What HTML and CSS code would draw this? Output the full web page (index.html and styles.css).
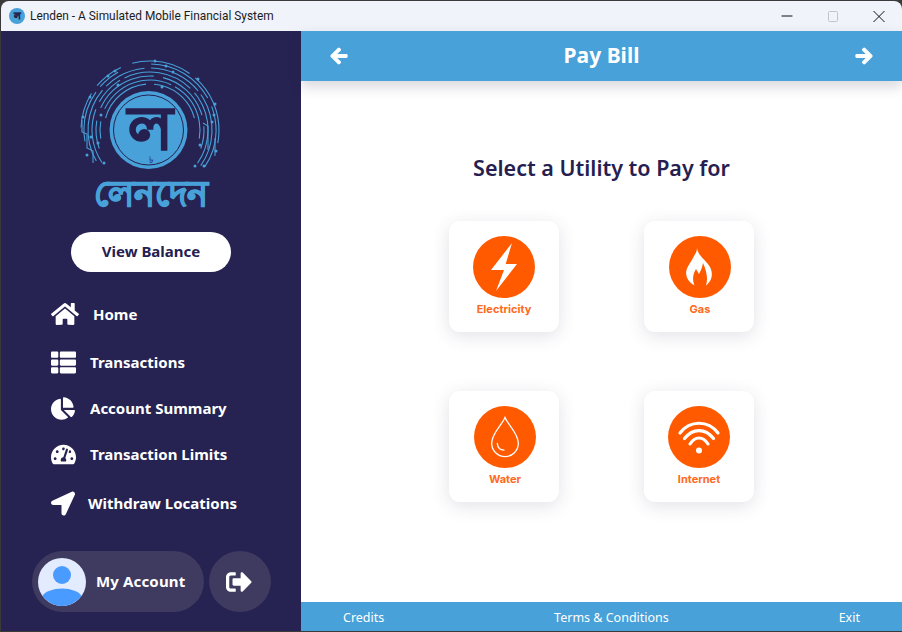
FILE: index.html
```html
<!DOCTYPE html>
<html lang="en">
  <head>
    <meta charset="UTF-8" />
    <title>Lenden</title>
    <link rel="stylesheet" href="styles.css">
  </head>
  <body>
    <div class="window">
      <div class="titlebar">
        <svg class="app-icon" viewBox="0 0 16 16">
          <circle cx="8" cy="8" r="8" fill="#48a1d8"/>
          <text x="8" y="11" text-anchor="middle" class="app-letter">ল</text>
        </svg>
        <span class="app-title">Lenden - A Simulated Mobile Financial System</span>
        <div class="controls">
          <svg viewBox="0 0 46 30"><path d="M17.500 15h11" stroke="#111" stroke-width="1"/></svg>
          <svg viewBox="0 0 46 30"><rect x="18.500" y="10.500" width="9" height="10" rx="1" fill="none" stroke="#c4c4c8"/></svg>
          <svg viewBox="0 0 46 30"><path d="M17.500 10l11 11M28.500 10l-11 11" stroke="#111" stroke-width="1"/></svg>
        </div>
      </div>
      <div class="main">
        <aside class="sidebar">
          <div class="logo">
            <svg class="logo-mark" viewBox="0 0 142 120">
              <g fill="none" stroke="#48a1d8" stroke-width="1.100">
                <circle cx="70" cy="72" r="69" pathLength="360" stroke-dasharray="30 8 25 10 50 6 60 171" transform="rotate(182 70 72)"/>
                <circle cx="70" cy="72" r="66" pathLength="360" stroke-dasharray="45 6 20 30 60 8 55 136" transform="rotate(170 70 72)"/>
                <circle cx="70" cy="72" r="62" pathLength="360" stroke-dasharray="70 5 40 6 50 4 70 115" transform="rotate(150 70 72)"/>
                <circle cx="70" cy="72" r="58" pathLength="360" stroke-dasharray="55 8 30 5 70 6 75 111" transform="rotate(146 70 72)"/>
                <circle cx="70" cy="72" r="54" pathLength="360" stroke-dasharray="30 14 70 10 60 12 24 140" transform="rotate(160 70 72)"/>
                <circle cx="70" cy="72" r="50" pathLength="360" stroke-dasharray="20 15 90 5 70 160" transform="rotate(170 70 72)"/>
                <circle cx="70" cy="72" r="46" pathLength="360" stroke-dasharray="70 10 70 210" transform="rotate(195 70 72)"/>
                <path d="M2 62v12l5 2v14l6 3v12M123 65l5 3v24M135 80v18"/>
              </g>
              <g fill="#48a1d8">
                <circle cx="75" cy="3" r="1.500"/><circle cx="86" cy="8" r="1.500"/><circle cx="93" cy="14" r="1.500"/>
                <circle cx="118" cy="21" r="1.500"/><circle cx="135" cy="46" r="1.500"/><circle cx="134" cy="57" r="1.500"/>
                <circle cx="124" cy="108" r="1.500"/><circle cx="115" cy="108" r="1.500"/><circle cx="24" cy="105" r="1.500"/>
                <circle cx="7" cy="97" r="1.500"/><circle cx="10" cy="39" r="1.500"/><circle cx="28" cy="18" r="1.500"/>
                <circle cx="35" cy="13" r="1.500"/><circle cx="38" cy="27" r="1.500"/><circle cx="3" cy="59" r="1.500"/>
                <circle cx="11" cy="79" r="1.500"/><circle cx="18" cy="85" r="1.500"/><circle cx="21" cy="57" r="1.500"/>
                <circle cx="82" cy="29" r="1.500"/><circle cx="132" cy="64" r="1.500"/><circle cx="120" cy="87" r="1.500"/>
                <circle cx="136" cy="93" r="1.500"/><circle cx="68.500" cy="72" r="39"/>
              </g>
              <circle cx="68.500" cy="72" r="35" fill="none" stroke="#25204f" stroke-width="1"/>
              <text x="70" y="91" text-anchor="middle" class="logo-letter">ল</text>
              <text x="71" y="105" text-anchor="middle" class="logo-taka">৳</text>
            </svg>
            <div class="wordmark">লেনদেন</div>
          </div>
          <button class="balance-btn">View Balance</button>
          <nav class="nav">
            <a class="nav-item nav-home">
              <svg class="nav-icon" viewBox="0 0 576 512"><path d="M280.37 148.26L96 300.11V464a16 16 0 0 0 16 16l112.06-.29a16 16 0 0 0 15.92-16V368a16 16 0 0 1 16-16h64a16 16 0 0 1 16 16v95.64a16 16 0 0 0 16 16.05L464 480a16 16 0 0 0 16-16V300L295.67 148.26a12.19 12.19 0 0 0-15.3 0zM571.6 251.47L488 182.56V44.05a12 12 0 0 0-12-12h-56a12 12 0 0 0-12 12v72.61L318.47 43a48 48 0 0 0-61 0L4.34 251.47a12 12 0 0 0-1.6 16.9l25.5 31A12 12 0 0 0 45.15 301l235.22-193.74a12.19 12.19 0 0 1 15.3 0L530.9 301a12 12 0 0 0 16.9-1.6l25.5-31a12 12 0 0 0-1.7-16.93z"/></svg>
              Home
            </a>
            <a class="nav-item nav-list">
              <svg class="nav-icon" viewBox="0 0 512 512"><path d="M149.333 216v80c0 13.255-10.745 24-24 24H24c-13.255 0-24-10.745-24-24v-80c0-13.255 10.745-24 24-24h101.333c13.255 0 24 10.745 24 24zM0 376v80c0 13.255 10.745 24 24 24h101.333c13.255 0 24-10.745 24-24v-80c0-13.255-10.745-24-24-24H24c-13.255 0-24 10.745-24 24zM125.333 32H24C10.745 32 0 42.745 0 56v80c0 13.255 10.745 24 24 24h101.333c13.255 0 24-10.745 24-24V56c0-13.255-10.745-24-24-24zm80 448H488c13.255 0 24-10.745 24-24v-80c0-13.255-10.745-24-24-24H205.333c-13.255 0-24 10.745-24 24v80c0 13.255 10.745 24 24 24zm-24-424v80c0 13.255 10.745 24 24 24H488c13.255 0 24-10.745 24-24V56c0-13.255-10.745-24-24-24H205.333c-13.255 0-24 10.745-24 24zm24 264H488c13.255 0 24-10.745 24-24v-80c0-13.255-10.745-24-24-24H205.333c-13.255 0-24 10.745-24 24v80c0 13.255 10.745 24 24 24z"/></svg>
              Transactions
            </a>
            <a class="nav-item nav-pie">
              <svg class="nav-icon" viewBox="0 0 544 512"><path d="M527.79 288H290.5l158.03 158.03c6.04 6.04 15.98 6.53 22.19.68 38.7-36.46 65.32-85.61 73.13-140.86 1.34-9.46-6.51-17.85-16.06-17.85zm-15.83-64.8C503.72 103.74 408.26 8.28 288.8.04 279.68-.59 272 7.1 272 16.24V240h223.77c9.14 0 16.82-7.68 16.19-16.8zM224 288V50.71c0-9.55-8.39-17.4-17.84-16.06C86.99 51.49-4.1 155.6.14 280.37 4.5 408.51 114.83 513.59 243.03 511.98c50.4-.63 96.97-16.87 135.26-44.03 7.9-5.6 8.42-17.23 1.57-24.08L224 288z"/></svg>
              Account Summary
            </a>
            <a class="nav-item nav-gauge">
              <svg class="nav-icon" viewBox="0 0 576 512"><path d="M288 32C128.94 32 0 160.94 0 320c0 52.8 14.25 102.26 39.06 144.8 5.61 9.62 16.3 15.2 27.44 15.2h443c11.14 0 21.83-5.58 27.44-15.2C561.75 422.26 576 372.8 576 320c0-159.06-128.94-288-288-288zm0 64c14.71 0 26.58 10.13 30.32 23.65-1.11 2.26-2.64 4.23-3.45 6.67l-9.22 27.67c-5.13 3.49-10.97 6.01-17.64 6.01-17.67 0-32-14.33-32-32S270.33 96 288 96zM96 384c-17.67 0-32-14.33-32-32s14.33-32 32-32 32 14.33 32 32-14.33 32-32 32zm48-160c-17.67 0-32-14.33-32-32s14.33-32 32-32 32 14.33 32 32-14.33 32-32 32zm246.77-72.41l-61.33 184C343.13 347.33 352 364.54 352 384c0 11.72-3.38 22.55-8.88 32H232.88c-5.5-9.45-8.88-20.28-8.88-32 0-33.94 26.5-61.43 59.9-63.59l61.34-184.01c4.17-12.56 17.73-19.45 30.36-15.17 12.57 4.19 19.35 17.79 15.17 30.36zm14.66 57.2l15.52-46.55c3.47-1.29 7.13-2.23 11.05-2.23 17.67 0 32 14.33 32 32s-14.33 32-32 32c-11.38-.01-20.89-6.28-26.57-15.22zM480 384c-17.67 0-32-14.33-32-32s14.33-32 32-32 32 14.33 32 32-14.33 32-32 32z"/></svg>
              Transaction Limits
            </a>
            <a class="nav-item nav-arrow">
              <svg class="nav-icon" viewBox="0 0 512 512"><path d="M444.52 3.52L28.74 195.42c-47.97 22.39-31.98 92.75 19.19 92.75h175.91v175.91c0 51.17 70.36 67.17 92.75 19.19l191.9-415.78c15.99-38.39-25.59-79.97-63.97-63.97z"/></svg>
              Withdraw Locations
            </a>
          </nav>
          <div class="account-row">
            <div class="account-pill">
              <svg class="avatar" viewBox="0 0 48 48">
                <circle cx="24" cy="24" r="24" fill="#e3ebff"/>
                <circle cx="24" cy="17" r="9" fill="#4a9bff"/>
                <path d="M4.500 38A20 9.500 0 0 1 43.500 38 24 24 0 0 1 4.500 38z" fill="#4a9bff"/>
              </svg>
              <span>My Account</span>
            </div>
            <div class="logout">
              <svg viewBox="0 0 512 512"><path d="M497 273L329 441c-15 15-41 4.5-41-17v-96H152c-13.3 0-24-10.7-24-24v-96c0-13.3 10.7-24 24-24h136V88c0-21.4 25.9-32 41-17l168 168c9.3 9.4 9.3 24.6 0 34zM192 436v-40c0-6.6-5.4-12-12-12H96c-17.7 0-32-14.3-32-32V160c0-17.7 14.3-32 32-32h84c6.6 0 12-5.4 12-12V76c0-6.6-5.4-12-12-12H96c-53 0-96 43-96 96v192c0 53 43 96 96 96h84c6.6 0 12-5.4 12-12z"/></svg>
            </div>
          </div>
        </aside>
        <section class="content">
          <header class="header">
            <svg class="arrow" viewBox="-20 -20 488 552"><path d="M257.5 445.1l-22.2 22.2c-9.4 9.4-24.6 9.4-33.9 0L7 273c-9.4-9.4-9.4-24.6 0-33.9L201.4 44.7c9.4-9.4 24.6-9.4 33.9 0l22.2 22.2c9.5 9.5 9.3 25-.4 34.3L136.6 216H424c13.3 0 24 10.7 24 24v32c0 13.3-10.7 24-24 24H136.6l120.5 114.8c9.8 9.3 10 24.8.4 34.3z"/></svg>
            <h1>Pay Bill</h1>
            <svg class="arrow" viewBox="-20 -20 488 552"><path d="M190.5 66.9l22.2-22.2c9.4-9.4 24.6-9.4 33.9 0L441 239c9.4 9.4 9.4 24.6 0 33.9L246.6 467.3c-9.4 9.4-24.6 9.4-33.9 0l-22.2-22.2c-9.5-9.5-9.3-25 .4-34.3L311.4 296H24c-13.3 0-24-10.7-24-24v-32c0-13.3 10.7-24 24-24h287.4L190.9 101.2c-9.8-9.3-10-24.8-.4-34.3z"/></svg>
          </header>
          <div class="body">
            <h2>Select a Utility to Pay for</h2>
            <div class="utilities">
              <div class="card">
                <svg class="utility-icon" viewBox="0 0 62 62">
                  <circle cx="31" cy="31" r="31" fill="#ff5a00"/>
                  <path d="M39 7L18 34H31L23 55 44 28H32.700z" fill="#fff"/>
                </svg>
                <span>Electricity</span>
              </div>
              <div class="card card-shift">
                <svg class="utility-icon" viewBox="0 0 62 62">
                  <circle cx="31" cy="31" r="31" fill="#ff5a00"/>
                  <path d="M28 12C29 20 37 24 41 31 45 39 42 46 37 49.500 39 43 38 36 34 27 33 33 31 36 30 38L27 33C24 38 23 43 25.500 49.500 19 46 16 40 17.500 34 18.500 30 22 26 24 22 26 18 28 16 28 12z" fill="#fff"/>
                </svg>
                <span>Gas</span>
              </div>
              <div class="card card-shift">
                <svg class="utility-icon" viewBox="0 0 62 62">
                  <circle cx="31" cy="31" r="31" fill="#ff5a00"/>
                  <path d="M31 11.500C28 19 17.700 27 17.700 37.300a13.300 13.300 0 0 0 26.600 0C44.300 27 34 19 31 11.500z" fill="none" stroke="#fff" stroke-width="1.300"/>
                  <path d="M23.300 37.500c.4 4 3 6.500 6.700 6.700" fill="none" stroke="#fff" stroke-width="1.300" stroke-linecap="round"/>
                </svg>
                <span>Water</span>
              </div>
              <div class="card">
                <svg class="utility-icon" viewBox="0 0 62 62">
                  <circle cx="31" cy="31" r="31" fill="#ff5a00"/>
                  <g fill="none" stroke="#fff" stroke-width="3.200" stroke-linecap="round">
                    <path d="M12 27C22 14 40 14 50 27"/>
                    <path d="M16.500 32.500C25 22 37 22 45.500 32.500"/>
                    <path d="M22 38C27 30 35 30 40 38"/>
                  </g>
                  <circle cx="31" cy="44.500" r="3" fill="#fff"/>
                </svg>
                <span>Internet</span>
              </div>
            </div>
          </div>
          <footer class="footer">
            <a>Credits</a>
            <a>Terms &amp; Conditions</a>
            <a>Exit</a>
          </footer>
        </section>
      </div>
    </div>
  </body>
</html>
```

FILE: styles.css
```css
* {
  margin: 0;
  padding: 0;
  box-sizing: border-box;
}
html,
body {
  height: 100%;
  background: #3a3a3a;
  overflow: hidden;
}
body {
  font-family: "Noto Sans", "Open Sans", sans-serif;
}
.window {
  display: flex;
  flex-direction: column;
  height: 632px;
  padding: 1px 0 1px 1px;
  background: #3a3a3a;
}

/* title bar */
.titlebar {
  display: flex;
  align-items: center;
  height: 30px;
  flex-shrink: 0;
  padding-left: 8px;
  background: #f0f3f9;
  border-radius: 8px 8px 0 0;
}
.app-icon {
  width: 16px;
  height: 16px;
}
.app-letter {
  font-size: 9px;
  font-weight: 700;
  fill: #25204f;
  stroke: #25204f;
  stroke-width: 0.4px;
}
.app-title {
  margin-left: 5px;
  font-family: Roboto, sans-serif;
  font-size: 11.9px;
  color: #1c1c1c;
}
.controls {
  display: flex;
  margin-left: auto;
}
.controls svg {
  width: 46px;
  height: 30px;
  display: block;
}

.main {
  display: flex;
  flex: 1;
  min-height: 0;
}

/* sidebar */
.sidebar {
  width: 300px;
  flex-shrink: 0;
  display: flex;
  flex-direction: column;
  align-items: flex-start;
  background: #262251;
  color: #fff;
}
.logo {
  display: flex;
  flex-direction: column;
  align-items: center;
  width: 300px;
  padding-top: 27px;
}
.logo-mark {
  display: block;
  width: 142px;
  height: 120px;
}
.logo-letter {
  font-size: 60px;
  font-weight: 700;
  fill: #25204f;
  stroke: #25204f;
  stroke-width: 1.5px;
}
.logo-taka {
  font-size: 9px;
  fill: #25204f;
}
.wordmark {
  height: 37px;
  margin-top: -4px;
  margin-bottom: 4px;
  font-size: 35px;
  line-height: 37px;
  font-weight: 700;
  color: #48a1d8;
  -webkit-text-stroke: 1.2px #48a1d8;
}
.balance-btn {
  align-self: center;
  width: 160px;
  height: 40px;
  margin-top: 17px;
  padding-bottom: 2px;
  border: 0;
  border-radius: 20px;
  background: #fff;
  color: #25204f;
  font: 700 15px "Noto Sans", sans-serif;
}
.nav {
  display: flex;
  flex-direction: column;
  padding: 19px 0 0 50px;
}
.nav-item {
  display: flex;
  align-items: center;
  height: 46px;
  font-size: 15px;
  font-weight: 700;
}
.nav-icon {
  height: 25px;
  fill: #fff;
}
.nav-home {
  gap: 14px;
}
.nav-home .nav-icon {
  width: 28px;
  height: 26px;
}
.nav-list {
  gap: 14px;
  margin-top: 2px;
}
.nav-list .nav-icon {
  width: 25px;
}
.nav-pie {
  gap: 15px;
}
.nav-pie .nav-icon {
  width: 24px;
}
.nav-gauge {
  gap: 14px;
}
.nav-gauge .nav-icon {
  width: 25px;
}
.nav-arrow {
  gap: 13px;
  margin-top: 3px;
}
.nav-arrow .nav-icon {
  width: 24px;
}
.account-row {
  display: flex;
  gap: 5px;
  margin: 25px 0 0 31px;
}
.account-pill {
  display: flex;
  align-items: center;
  gap: 10px;
  width: 172px;
  height: 61px;
  padding-left: 6px;
  border-radius: 31px;
  background: #3f3a5f;
  font-size: 15px;
  font-weight: 700;
  letter-spacing: 0.15px;
}
.account-pill span {
  padding-bottom: 2px;
}
.avatar {
  width: 48px;
  height: 48px;
}
.logout {
  display: flex;
  align-items: center;
  justify-content: center;
  width: 62px;
  height: 61px;
  padding-right: 2px;
  border-radius: 50%;
  background: #3f3a5f;
}
.logout svg {
  width: 26px;
  height: 26px;
  fill: #fff;
}

/* main panel */
.content {
  flex: 1;
  display: flex;
  flex-direction: column;
  background: #fff;
}
.header {
  position: relative;
  display: flex;
  align-items: center;
  justify-content: space-between;
  height: 50px;
  padding: 0 29px;
  background: #48a1d8;
  box-shadow: 0 6px 12px rgba(40, 40, 80, 0.18);
}
.header h1 {
  padding-bottom: 2px;
  font-size: 21px;
  font-weight: 700;
  color: #fff;
}
.arrow {
  width: 18px;
  height: 20px;
  fill: #fff;
  stroke: #fff;
  stroke-width: 30px;
  stroke-linejoin: round;
}
.body {
  flex: 1;
  display: flex;
  flex-direction: column;
  align-items: center;
  padding-top: 71px;
}
.body h2 {
  font-size: 21.5px;
  font-weight: 600;
  line-height: 32px;
  color: #25204f;
}
.utilities {
  display: grid;
  grid-template-columns: 110px 110px;
  column-gap: 85px;
  row-gap: 59px;
  margin-top: 37px;
}
.card {
  display: flex;
  flex-direction: column;
  align-items: center;
  height: 111px;
  padding-top: 15px;
  border-radius: 11px;
  background: #fff;
  box-shadow: 0 4px 18px rgba(50, 50, 93, 0.14);
}
.card-shift {
  padding-left: 2px;
}
.utility-icon {
  width: 62px;
  height: 62px;
}
.card span {
  margin-top: 4px;
  font-family: Inter, sans-serif;
  font-size: 11px;
  font-weight: 700;
  line-height: 14px;
  color: #ff6a20;
}
.footer {
  display: flex;
  align-items: center;
  justify-content: space-between;
  height: 29px;
  padding: 1px 42px 0;
  background: #48a1d8;
  color: #fff;
  font-size: 12.5px;
}
```
